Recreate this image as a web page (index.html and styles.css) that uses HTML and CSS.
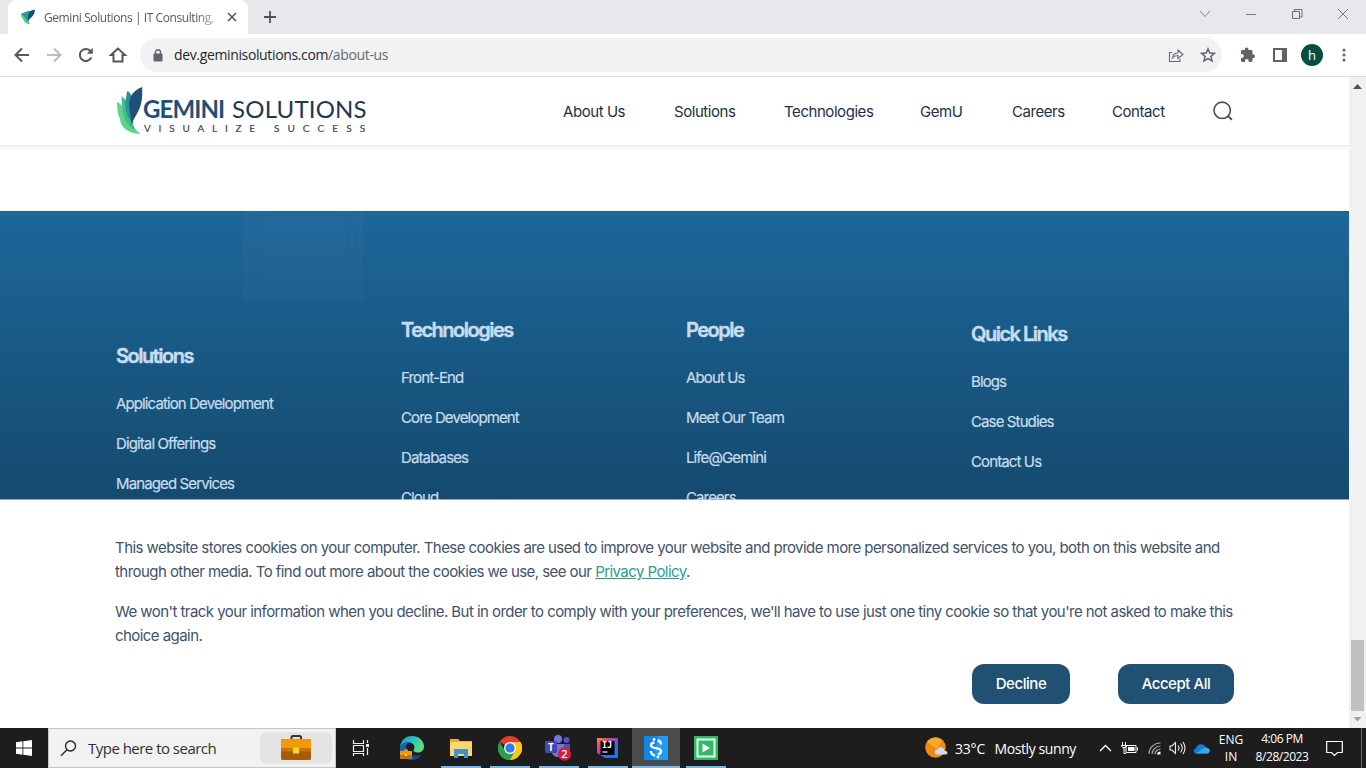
FILE: index.html
```html
<!DOCTYPE html>
<html lang="en">
<head>
<meta charset="utf-8">
<title>Gemini Solutions | IT Consulting</title>
<link rel="stylesheet" href="styles.css">
</head>
<body>
<div class="tabstrip">
  <div class="tab">
    <svg class="favicon" width="16" height="16" viewBox="0 0 16 16"><path d="M15 .8C9 1.500 6 4 6.500 9L8 13C9 9 14.500 8 15 .8z" fill="#1d4d73"/><path d="M10 2C6 2 4 4 1 4.500c1 2 1 3 2.500 4.500L4 11l6 4C6.500 10 8 5 10 2z" fill="#2d9d92"/><path d="M1 5.500C3 6 5 8 6 11l4.500 4.200C5 15 3.500 12.500 3.500 10.500 2 9 1 8 1 5.500z" fill="#57d492"/></svg>
    <span class="tab-title">Gemini Solutions | IT Consulting,</span>
    <svg class="tab-close" width="10" height="10" viewBox="0 0 10 10"><path d="M1 1l8 8M9 1L1 9" stroke="#505357" stroke-width="1.500"/></svg>
  </div>
  <svg class="newtab" width="14" height="14" viewBox="0 0 14 14"><path d="M7 1v12M1 7h12" stroke="#505357" stroke-width="1.800"/></svg>
  <div class="win-controls">
    <svg width="46" height="28" viewBox="0 0 46 28"><path d="M18 11l5 5.500L28 11" fill="none" stroke="#85878a"/></svg>
    <svg width="46" height="28" viewBox="0 0 46 28"><path d="M18 14.500h10" stroke="#77797c"/></svg>
    <svg width="46" height="28" viewBox="0 0 46 28"><path d="M18.500 11.500h7v7h-7zM20.500 11.500v-2h7.500v7.500h-2.500" fill="none" stroke="#6c6e71"/></svg>
    <svg width="46" height="28" viewBox="0 0 46 28"><path d="M18 9l10 10M28 9L18 19" stroke="#77797c"/></svg>
  </div>
</div>
<div class="toolbar">
  <svg class="nav-ico" width="32" height="32" viewBox="0 0 32 32"><path d="M23 16H10M16 9.500L9.500 16l6.500 6.500" fill="none" stroke="#54575b" stroke-width="2"/></svg>
  <svg class="nav-ico" width="32" height="32" viewBox="0 0 32 32"><path d="M9 16h13M16 9.500l6.500 6.500-6.500 6.500" fill="none" stroke="#babcbe" stroke-width="2"/></svg>
  <svg class="nav-ico" width="32" height="32" viewBox="0 0 32 32"><path d="M21.300 18.500a6 6 0 1 1-.7-6.200" fill="none" stroke="#54575b" stroke-width="2"/><path d="M22.800 8.800v6h-6z" fill="#54575b"/></svg>
  <svg class="nav-ico" width="32" height="32" viewBox="0 0 32 32"><path d="M16 9.500l-7 6.500h2.500v6.500h9V16H23z" fill="none" stroke="#54575b" stroke-width="2"/></svg>
  <div class="omnibox">
    <svg width="10" height="13" viewBox="0 0 10 13"><rect x=".5" y="4.500" width="9" height="8" rx="1" fill="#5f6368"/><path d="M2.500 5V3.300a2.500 2.500 0 0 1 5 0V5" fill="none" stroke="#5f6368" stroke-width="1.400"/></svg>
    <span class="url">dev.geminisolutions.com<span class="path">/about-us</span></span>
    <svg class="share" width="16" height="16" viewBox="0 0 16 16"><path d="M4 5.500H1.500v9h10.500V12M4.500 11C5 7.500 7 6 10 6V3l5 4.500-5 4v-3c-2.500 0-4 .7-5.500 2.500z" fill="none" stroke="#65686c" stroke-width="1.100"/></svg>
    <svg class="star" width="16" height="16" viewBox="0 0 16 16"><path d="M8 1.800l1.800 4.200 4.600.4-3.500 3 1.100 4.500L8 11.500l-4 2.400 1.100-4.500-3.500-3 4.600-.4z" fill="none" stroke="#5f6368" stroke-width="1.500"/></svg>
  </div>
  <svg class="ext" width="16" height="16" viewBox="0 0 16 16"><path d="M13.300 7.500h-.8V4.400c0-.8-.6-1.300-1.300-1.300H8.500v-.9a1.800 1.800 0 0 0-3.600 0v.9H2.300C1.500 3.100 1 3.700 1 4.400v2.700h.9a1.900 1.900 0 0 1 0 3.800H1v2.600c0 .8.600 1.400 1.300 1.400h2.600V14a1.900 1.900 0 0 1 3.800 0v.9h2.500c.8 0 1.300-.6 1.300-1.400v-2.600h.8a1.700 1.700 0 0 0 0-3.400z" fill="#5f6368"/></svg>
  <svg class="panel" width="14" height="14" viewBox="0 0 14 14"><path d="M0 0h14v14H0zM2 2v10h7V2z" fill="#5f6368" fill-rule="evenodd"/></svg>
  <span class="avatar">h</span>
  <svg class="dots" width="4" height="14" viewBox="0 0 4 14"><g fill="#5f6368"><circle cx="2" cy="2" r="1.500"/><circle cx="2" cy="7" r="1.500"/><circle cx="2" cy="12" r="1.500"/></g></svg>
</div>

<div class="browser-view">
  <div class="page">
    <header class="site-header">
      <div class="logo">
        <svg width="26" height="48" viewBox="0 0 28 48" preserveAspectRatio="none">
          <path d="M0 15c3 1 5 3 8 7l5 14 12 11C10 46 4 40 3 31c-2-3-3-9-3-16z" fill="#5bd68b"/>
          <path d="M5 9c3 3 6 5 7 8l4 18 4 8C11 39 5 31 5 9z" fill="#43b98e"/>
          <path d="M11 4c3 1 5 4 5 7l-1 14 3 12C10 30 7 20 11 4z" fill="#2c9294"/>
          <path d="M27 0C16 4 11 12 14 25l2 14c1-11 13-14 11-39z" fill="#1f5078"/>
        </svg>
        <div class="logo-words">
          <div class="logo-name"><b>GEMINI</b><span>SOLUTIONS</span></div>
          <div class="logo-tag"><span class="t1">VISUALIZE</span><span class="t2">SUCCESS</span></div>
        </div>
      </div>
      <nav class="site-nav">
        <a class="n1">About Us</a><a class="n2">Solutions</a><a class="n3">Technologies</a><a class="n4">GemU</a><a class="n5">Careers</a><a class="n6">Contact</a>
        <svg width="20" height="20" viewBox="0 0 20 20"><circle cx="9.200" cy="9.300" r="8.200" fill="none" stroke="#4b4f57" stroke-width="1.600"/><path d="M15 15.300l4 3.500" stroke="#4b4f57" stroke-width="1.800"/></svg>
      </nav>
    </header>
    <div class="blank"></div>
    <footer class="site-footer">
      <svg class="ghost" width="120" height="116" viewBox="0 0 120 116"><path d="M0 26h120v90H0z" fill="#fff" fill-opacity=".022"/><g fill="none" stroke="#123" stroke-opacity=".02" stroke-width="3"><circle cx="60" cy="56" r="54"/><circle cx="60" cy="56" r="46"/><path d="M34 78h54"/></g></svg>
      <section class="col c1"><h2>Solutions</h2><a>Application Development</a><a>Digital Offerings</a><a>Managed Services</a></section>
      <section class="col c2"><h2>Technologies</h2><a>Front-End</a><a>Core Development</a><a>Databases</a><a>Cloud</a></section>
      <section class="col c2"><h2>People</h2><a>About Us</a><a>Meet Our Team</a><a>Life@Gemini</a><a>Careers</a></section>
      <section class="col c4"><h2>Quick Links</h2><a>Blogs</a><a>Case Studies</a><a>Contact Us</a></section>
    </footer>
    <div class="cookie">
      <p><span>This website stores cookies on your computer. These cookies are used to improve your website and provide more personalized services to you, both on this website and</span><br><span>through other media. To find out more about the cookies we use, see our <a class="policy">Privacy Policy</a>.</span></p>
      <p><span>We won't track your information when you decline. But in order to comply with your preferences, we'll have to use just one tiny cookie so that you're not asked to make this</span><br><span>choice again.</span></p>
      <div class="actions"><button class="decline">Decline</button><button class="accept">Accept All</button></div>
    </div>
  </div>
  <div class="scrollbar">
    <svg width="9" height="5" viewBox="0 0 9 5"><path d="M0 5l4.500-5L9 5z" fill="#505050"/></svg>
    <div class="thumb"></div>
    <svg width="9" height="5" viewBox="0 0 9 5"><path d="M.5 0l4 4.500L8.500 0z" fill="#a0a0a0"/></svg>
  </div>
</div>

<div class="taskbar">
  <div class="start"><svg width="16" height="16" viewBox="0 0 16 16"><path d="M0 2.200l6.500-.9v6.300H0zM7.300 1.200L16 0v7.600H7.300zM0 8.400h6.500v6.300L0 13.800zM7.300 8.400H16V16l-8.700-1.200z" fill="#fff"/></svg></div>
  <div class="search">
    <svg width="17" height="17" viewBox="0 0 17 17"><circle cx="10.500" cy="6" r="5" fill="none" stroke="#222" stroke-width="1.300"/><path d="M7 9.800L1 15.800" stroke="#222" stroke-width="1.300"/></svg>
    <span class="search-text">Type here to search</span>
    <div class="doodle"><svg width="30" height="26" viewBox="0 0 30 26"><path d="M10.500 5V2.500q0-1.500 1.500-1.500h6.500q1.500 0 1.500 1.500V5" fill="none" stroke="#333" stroke-width="2"/><rect y="4" width="30" height="21" rx="1.500" fill="#a65c0d"/><path d="M0 5.500Q0 4 1.500 4h27Q30 4 30 5.500V14H0z" fill="#ef9a08"/><path d="M0 13h30v3.500H0z" fill="#c97408"/><path d="M12 12.500h6v6h-6z" fill="#fbd42e"/></svg></div>
  </div>
  <div class="slot taskview"><svg width="18" height="16" viewBox="0 0 18 16"><path d="M1.500 0v3.500h10V0M1.500 5.500h10v6h-10zM1.500 16v-2.500h10V16M15.500 0v3M15.500 8v7" fill="none" stroke="#eee" stroke-width="1.200"/><path d="M14 4h3v3h-3z" fill="#eee"/></svg></div>
  <div class="slot"><svg width="26" height="26" viewBox="0 0 26 26"><defs><linearGradient id="edge" x1="0" y1="0" x2="1" y2=".4"><stop offset="0" stop-color="#1a90d2"/><stop offset=".55" stop-color="#2fc0c8"/><stop offset="1" stop-color="#5fdc7c"/></linearGradient></defs><path d="M1 12C2 4 8 1 13 1c7 0 12 5 12 10.500 0 4-3 6-6 6-3.500 0-5-1-4.500-2.500 2-2 1-7-4-7.500C7 7 3 8 1 12z" fill="url(#edge)"/><path d="M1 12c2-4 6-5 9.500-4.500C6 9 6 14 8 17c3 5 9 6 14 3-3 4-7 5-10 5C4 24.500 0 18 1 12z" fill="#1467b8"/><path d="M8 11c-1 6 4 11 14 9-3 4-7 5-10 5-5-3-7-9-4-14z" fill="#174a8c"/><path d="M1 16h12v8H1z" fill="#c97209"/><path d="M1 16h12v4H1zM5 16v-1.500h4V16" fill="#ef9911"/><path d="M6 19h2v2H6z" fill="#ffe04a"/></svg></div>
  <div class="slot open"><svg width="22" height="20" viewBox="0 0 22 20"><path d="M0 1h8l2 2h12v15H0z" fill="#e8ae32"/><path d="M1 4h21v14H0V5z" fill="#ffd86b"/><path d="M4 20v-9h14v9h-4v-4H8v4z" fill="#3e93ce"/></svg></div>
  <div class="slot open"><svg width="24" height="24" viewBox="0 0 24 24"><path d="M12 12L1.600 6A12 12 0 0 1 22.400 6z" fill="#e33b2e"/><path d="M12 12l10.400-6A12 12 0 0 1 12 24z" fill="#fbc617"/><path d="M1.600 6L12 24A12 12 0 0 1 1.600 6z" fill="#2c9f4b"/><path d="M12 6h10.400a12 12 0 0 1 0 12L12 24l5.200-9z" fill="#fbc617"/><path d="M1.600 6L7 15l5 3 5-3-5 9A12 12 0 0 1 1.600 6z" fill="#2c9f4b"/><circle cx="12" cy="12" r="6" fill="#fff"/><circle cx="12" cy="12" r="4.700" fill="#3979e6"/></svg></div>
  <div class="slot open"><svg width="28" height="26" viewBox="0 0 28 26"><circle cx="13" cy="4" r="4" fill="#7478dc"/><circle cx="21.500" cy="5" r="3" fill="#5157bd"/><path d="M7 9h12v9a6.500 6.500 0 0 1-12 0z" fill="#7177d8"/><path d="M19 9h6v8a5 5 0 0 1-6 4z" fill="#4c52b8"/><rect y="6" width="12" height="12" rx="1" fill="#4347ae"/><text x="6" y="15.500" text-anchor="middle" class="svg-bold white" font-size="10">T</text><circle cx="19.500" cy="19" r="6.700" fill="#d21f40"/><text x="19.500" y="23" text-anchor="middle" class="svg-ui white" font-size="11">2</text></svg></div>
  <div class="slot open"><svg width="22" height="22" viewBox="0 0 22 22"><defs><linearGradient id="ij" x1="0" y1="0" x2="1" y2="1"><stop offset="0" stop-color="#f98b32"/><stop offset=".3" stop-color="#f43a79"/><stop offset=".5" stop-color="#7a4dd8"/><stop offset=".8" stop-color="#1778e8"/></linearGradient></defs><path d="M0 1h21v20H8L0 16z" fill="url(#ij)"/><path d="M3.500 4h14v14h-14z"/><text x="5" y="11" class="svg-mono white" font-size="8.500">IJ</text><path d="M5.500 15h5" stroke="#fff" stroke-width="1.200"/></svg></div>
  <div class="slot open active"><svg width="24" height="24" viewBox="0 0 24 24"><path d="M0 0h24v24H0z" fill="#1184e8"/><path d="M14 0h10v24H9z" fill="#1e9cf4"/><path d="M13.500 4.500Q17 5 17 8.500M10.500 6.500Q7 7 7 9.300 7 11.500 12 12.300 17 13 17 15.500 17 17.500 14 18.500M7 15Q7 19 11 19.500" fill="none" stroke="#fff" stroke-width="2.400"/><circle cx="10" cy="3.500" r="1.400" fill="#fff"/><circle cx="14" cy="21" r="1.400" fill="#fff"/></svg></div>
  <div class="slot open"><svg width="24" height="24" viewBox="0 0 24 24"><path d="M0 0h24v24H0z" fill="#2ebb63"/><path d="M3.500 3.500h17v17h-17z" fill="none" stroke="#effff3" stroke-width="2"/><path d="M8.500 7.500v9l7.500-4.500z" fill="#fff"/></svg></div>
  <div class="tray">
    <svg class="sun" width="24" height="22" viewBox="0 0 24 22"><circle cx="10.500" cy="10.500" r="10.300" fill="#f28a17"/><path d="M2 5a10.300 10.300 0 0 1 15-2l-5 9z" fill="#f8ab2b"/><path d="M10 16.500q-1-3.500 2.500-4 2-4 6-1 1 1 1 2.500 3-.5 3 2 0 1.500-2 1.500h-8.500q-1.500 0-2-1z" fill="#cfdcf4"/></svg>
    <span class="weather"><span>33°C</span><span class="sunny">Mostly sunny</span></span>
    <svg class="caret" width="13" height="8" viewBox="0 0 13 8"><path d="M1 7l5.500-5.500L12 7" fill="none" stroke="#fff" stroke-width="1.300"/></svg>
    <svg class="battery" width="17" height="12" viewBox="0 0 17 12"><path d="M5 3.500h10v7H5zM16.500 5.500v3" fill="none" stroke="#fff"/><path d="M7 5h6.500v4H7z" fill="#fff"/><path d="M1.500 0v3M4.500 0v3M.5 3.500h5v1l-1.500 1H2l-1.500-1zM3 5v6.500h2" fill="none" stroke="#fff"/></svg>
    <svg class="wifi" width="14" height="13" viewBox="0 0 14 13"><g fill="none" stroke="#aaa" stroke-width="1.200"><path d="M1 12C1 6 6 1 12.500 1M4 12c0-4 4-8 8.500-8M7 12c0-2.500 3-5 5.500-5"/></g><path d="M9 12.500c0-2 1.500-3 3.500-3v3z" fill="#fff"/></svg>
    <svg class="speaker" width="17" height="14" viewBox="0 0 17 14"><path d="M1 5h2l3.500-3.500v11L3 9H1zM9 4.500q2 2.500 0 5M11.500 2.500q3.500 4.500 0 9M14 1q4 6 0 12" fill="none" stroke="#eee" stroke-width="1.100"/></svg>
    <svg class="cloud" width="17" height="11" viewBox="0 0 17 11"><path d="M1.500 10Q-.5 7 3 5 5 0 9.500 1.500 12 2 12.500 4.500 17 5 16.500 8.500 16 10.500 14 10.500H3z" fill="#137dd5"/><path d="M3 10.500L11 5q2-1 4 0 2.500 2 1.500 4-1 1.500-3 1.500z" fill="#36a9ee"/></svg>
    <div class="lang"><span>ENG</span><span>IN</span></div>
    <div class="clock"><span>4:06 PM</span><span>8/28/2023</span></div>
    <svg class="note" width="17" height="17" viewBox="0 0 17 17"><path d="M.7 1.500h15.600v11h-4.800l-3 3-3-3H.7z" fill="none" stroke="#fff" stroke-width="1.200"/></svg>
    <div class="peek"></div>
  </div>
</div>
</body>
</html>
```
FILE: styles.css
```css
* { box-sizing: border-box; }
body { margin: 0; width: 1366px; height: 768px; overflow: hidden; display: flex; flex-direction: column; background: #fff; font-family: "Open Sans", "Noto Sans", sans-serif; }
svg { display: block; flex: none; }
span, a, h2 { white-space: nowrap; }

.tabstrip { height: 34px; flex: none; background: #e7e8ec; display: flex; padding-left: 8px; }
.tab { width: 240px; background: #fff; border-radius: 8px 8px 0 0; display: flex; align-items: center; padding-left: 12px; }
.tab-title { width: 173px; margin-left: 8px; overflow: hidden; font-size: 12px; letter-spacing: -0.42px; color: #55585c; -webkit-mask-image: linear-gradient(90deg, #000 88%, rgba(0,0,0,.3) 100%); }
.tab-close { margin-left: 10px; }
.newtab { margin: 10px 0 0 15px; }
.win-controls { display: flex; margin-left: auto; }

.toolbar { height: 43px; flex: none; border-bottom: 1px solid #dcddde; display: flex; align-items: center; padding-left: 6px; }
.omnibox { width: 1082px; height: 34px; margin-left: 6px; border-radius: 17px; background: #f1f2f4; display: flex; align-items: center; padding-left: 13px; }
.url { margin: -1px 0 0 11px; font-size: 14px; letter-spacing: -0.36px; color: #26282b; }
.path { color: #66696d; }
.share { margin-left: auto; }
.star { margin: 0 6px 0 16px; }
.ext { margin-left: 18px; }
.panel { margin-left: 17px; }
.avatar { width: 22px; height: 22px; margin-left: 14px; border-radius: 50%; background: #044f3e; color: #fff; font-size: 13px; line-height: 22px; text-align: center; }
.dots { margin-left: 19px; }

.browser-view { height: 651px; flex: none; display: flex; }
.page { width: 1349px; display: flex; flex-direction: column; font-family: Inter, sans-serif; }
.site-header { height: 69px; flex: none; display: flex; align-items: flex-start; padding: 0 116px; border-bottom: 1px solid #ececec; box-shadow: 0 2px 4px rgba(0,0,0,.06); }
.logo { width: 447px; display: flex; padding: 10px 0 0 1px; }
.logo-words { padding-top: 7px; font-family: Lato, sans-serif; }
.logo-name { display: flex; gap: 6px; height: 29px; font-size: 24px; line-height: 29px; }
.logo-name b { width: 83px; color: #1f5078; letter-spacing: -0.9px; }
.logo-name span { color: #22384e; letter-spacing: 0.2px; }
.logo-tag { display: flex; gap: 11px; margin-left: 1px; font-size: 10px; line-height: 10px; color: #3b4b5c; -webkit-text-stroke: 0.2px #3b4b5c; }
.t1 { letter-spacing: 7.800px; }
.t2 { letter-spacing: 8.100px; }
.site-nav { display: flex; align-items: center; height: 68px; color: #1c3147; font-size: 15px; gap: 48px; letter-spacing: -0.44px; }
.n1 { width: 63px; }
.n2 { width: 62px; }
.n3 { width: 88px; }
.n4 { width: 44px; }
.n5 { width: 52px; }
.n6 { width: 53px; }

.blank { height: 65px; flex: none; }
.site-footer { position: relative; height: 289px; flex: none; overflow: hidden; display: flex; padding-left: 116px; background: linear-gradient(#1d679b 0%, #1a5d8b 35%, #154a6e 100%); box-shadow: inset 0 -1px #8fa9bb; }
.ghost { position: absolute; left: 243px; top: -26px; }
.col { width: 285px; display: flex; flex-direction: column; color: #c8ddec; }
.col h2 { margin: 0 0 16px; font-size: 20px; line-height: 32px; font-weight: 600; letter-spacing: -1.500px; -webkit-text-stroke: 0.4px #c8ddec; }
.col a { height: 40px; flex: none; font-size: 15px; line-height: 32px; letter-spacing: -0.880px; -webkit-text-stroke: 0.2px #c8ddec; }
.c1 { padding-top: 129px; }
.c2 { padding-top: 103px; }
.c4 { padding-top: 107px; }

.cookie { height: 228px; padding: 36px 115px 0; color: #40536a; font-size: 15px; line-height: 24px; letter-spacing: -0.555px; }
.cookie p { margin: 0 0 16px; }
.policy { color: #2a9d93; text-decoration: underline; }
.actions { display: flex; justify-content: flex-end; gap: 48px; }
.actions button { height: 40px; border: 0; border-radius: 12px; background: #205072; color: #fff; font: 500 15px Inter, sans-serif; letter-spacing: -0.45px; padding: 0 0 1px; }
.actions .decline { width: 98px; }
.actions .accept { width: 116px; }

.scrollbar { width: 17px; background: #f1f1f1; display: flex; flex-direction: column; align-items: center; padding: 7px 0 6px; }
.thumb { width: 13px; height: 71px; margin: auto 0 6px; background: #c1c1c1; }

.taskbar { height: 40px; flex: none; display: flex; background: #1d1d1d; color: #fff; }
.start { width: 48px; display: flex; align-items: center; justify-content: center; }
.search { width: 288px; background: #f2f2f2; border: 1px solid #c5c5c5; display: flex; align-items: center; padding-left: 11px; }
.search-text { width: 129px; margin-left: 11px; font-size: 15px; color: #303030; letter-spacing: -0.52px; }
.doodle { width: 72px; height: 32px; margin-left: auto; margin-right: 3px; border-radius: 7px; background: #e3e3e3; display: flex; align-items: center; justify-content: center; }
.slot { width: 49px; display: flex; align-items: center; justify-content: center; }
.taskview { width: 51px; padding-right: 2px; }
.open { background: linear-gradient(#7ab8ea, #7ab8ea) 50% 100% / 40px 2px no-repeat; }
.active { width: 49px; background: linear-gradient(#7ab8ea, #7ab8ea) 0 100% / 48px 2px no-repeat, linear-gradient(#4b4b4b, #4b4b4b) 0 0 / 48px 40px no-repeat; padding-right: 1px; }
.svg-bold { font-family: "Open Sans", sans-serif; font-weight: 700; }
.svg-ui { font-family: "Open Sans", sans-serif; font-weight: 600; }
.svg-mono { font-family: "DejaVu Sans Mono", monospace; font-weight: 700; }
.white { fill: #fff; }
.tray { flex: 1; display: flex; align-items: center; padding-left: 195px; }
.weather { width: 121px; margin-left: 6px; display: flex; justify-content: space-between; font-size: 14px; letter-spacing: -0.2px; }
.sunny { letter-spacing: -0.4px; }
.caret { margin-left: 23px; }
.battery { margin-left: 9px; }
.wifi { margin-left: 10px; }
.speaker { margin-left: 7px; }
.cloud { margin-left: 7px; }
.lang { width: 42px; display: flex; flex-direction: column; align-items: center; font-size: 12px; line-height: 17px; }
.clock { width: 60px; display: flex; flex-direction: column; align-items: center; font-size: 12px; line-height: 18px; letter-spacing: -0.45px; }
.note { margin-left: 14px; }
.peek { width: 1px; height: 40px; margin: 0 4px 0 auto; background: #666; }
```
